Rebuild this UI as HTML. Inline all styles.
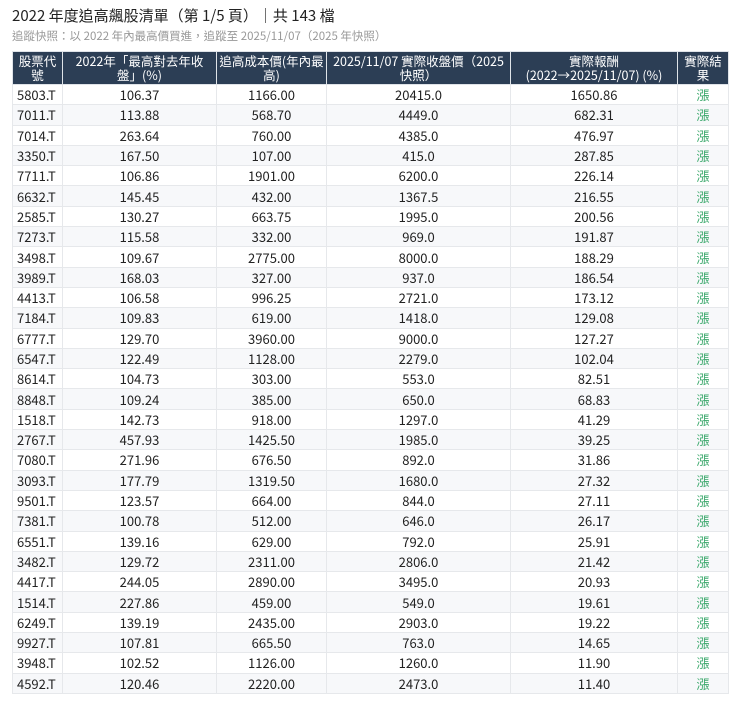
<!DOCTYPE html>
<html><head><meta charset="utf-8"><style>
body{margin:0;background:#fff;font-family:"Noto Sans CJK TC",sans-serif;color:#222;width:740px;height:706px;overflow:hidden}
h1{position:absolute;left:12px;top:6px;margin:0;font-size:15px;line-height:20px;font-weight:normal;color:#222}
.sub{position:absolute;left:12px;top:28px;font-size:11.5px;line-height:16px;color:#999}
table{position:absolute;left:12px;top:51px;border-collapse:collapse;width:716px;font-size:13px;table-layout:fixed}
th{background:#2c3e55;color:#fff;font-weight:normal;height:32px;padding:0;line-height:14px;border:1px solid #dfe3e8;font-size:12.5px;white-space:nowrap;overflow:hidden}
td{height:19.3px;padding:0 4px;text-align:center;border:1px solid #e6e8eb;line-height:19px}
td:first-child{text-align:left}
tr:nth-child(even) td{background:#f7f8fa}
td.g{color:#3aa86b}
</style></head><body>
<h1>2022 年度追高飆股清單（第 1/5 頁）｜共 143 檔</h1>
<div class="sub">追蹤快照：以 2022 年內最高價買進，追蹤至 2025/11/07（2025 年快照）</div>
<table>
<colgroup><col style="width:50px"><col style="width:154px"><col style="width:110px"><col style="width:184px"><col style="width:167px"><col style="width:51px"></colgroup>
<thead><tr><th>股票代<br>號</th><th>2022年「最高對去年收<br>盤」(%)</th><th>追高成本價(年內最<br>高)</th><th>2025/11/07 實際收盤價（2025<br>快照）</th><th>實際報酬<br>(2022→2025/11/07) (%)</th><th>實際結<br>果</th></tr></thead>
<tbody>
<tr><td>5803.T</td><td>106.37</td><td>1166.00</td><td>20415.0</td><td>1650.86</td><td class="g">漲</td></tr>
<tr><td>7011.T</td><td>113.88</td><td>568.70</td><td>4449.0</td><td>682.31</td><td class="g">漲</td></tr>
<tr><td>7014.T</td><td>263.64</td><td>760.00</td><td>4385.0</td><td>476.97</td><td class="g">漲</td></tr>
<tr><td>3350.T</td><td>167.50</td><td>107.00</td><td>415.0</td><td>287.85</td><td class="g">漲</td></tr>
<tr><td>7711.T</td><td>106.86</td><td>1901.00</td><td>6200.0</td><td>226.14</td><td class="g">漲</td></tr>
<tr><td>6632.T</td><td>145.45</td><td>432.00</td><td>1367.5</td><td>216.55</td><td class="g">漲</td></tr>
<tr><td>2585.T</td><td>130.27</td><td>663.75</td><td>1995.0</td><td>200.56</td><td class="g">漲</td></tr>
<tr><td>7273.T</td><td>115.58</td><td>332.00</td><td>969.0</td><td>191.87</td><td class="g">漲</td></tr>
<tr><td>3498.T</td><td>109.67</td><td>2775.00</td><td>8000.0</td><td>188.29</td><td class="g">漲</td></tr>
<tr><td>3989.T</td><td>168.03</td><td>327.00</td><td>937.0</td><td>186.54</td><td class="g">漲</td></tr>
<tr><td>4413.T</td><td>106.58</td><td>996.25</td><td>2721.0</td><td>173.12</td><td class="g">漲</td></tr>
<tr><td>7184.T</td><td>109.83</td><td>619.00</td><td>1418.0</td><td>129.08</td><td class="g">漲</td></tr>
<tr><td>6777.T</td><td>129.70</td><td>3960.00</td><td>9000.0</td><td>127.27</td><td class="g">漲</td></tr>
<tr><td>6547.T</td><td>122.49</td><td>1128.00</td><td>2279.0</td><td>102.04</td><td class="g">漲</td></tr>
<tr><td>8614.T</td><td>104.73</td><td>303.00</td><td>553.0</td><td>82.51</td><td class="g">漲</td></tr>
<tr><td>8848.T</td><td>109.24</td><td>385.00</td><td>650.0</td><td>68.83</td><td class="g">漲</td></tr>
<tr><td>1518.T</td><td>142.73</td><td>918.00</td><td>1297.0</td><td>41.29</td><td class="g">漲</td></tr>
<tr><td>2767.T</td><td>457.93</td><td>1425.50</td><td>1985.0</td><td>39.25</td><td class="g">漲</td></tr>
<tr><td>7080.T</td><td>271.96</td><td>676.50</td><td>892.0</td><td>31.86</td><td class="g">漲</td></tr>
<tr><td>3093.T</td><td>177.79</td><td>1319.50</td><td>1680.0</td><td>27.32</td><td class="g">漲</td></tr>
<tr><td>9501.T</td><td>123.57</td><td>664.00</td><td>844.0</td><td>27.11</td><td class="g">漲</td></tr>
<tr><td>7381.T</td><td>100.78</td><td>512.00</td><td>646.0</td><td>26.17</td><td class="g">漲</td></tr>
<tr><td>6551.T</td><td>139.16</td><td>629.00</td><td>792.0</td><td>25.91</td><td class="g">漲</td></tr>
<tr><td>3482.T</td><td>129.72</td><td>2311.00</td><td>2806.0</td><td>21.42</td><td class="g">漲</td></tr>
<tr><td>4417.T</td><td>244.05</td><td>2890.00</td><td>3495.0</td><td>20.93</td><td class="g">漲</td></tr>
<tr><td>1514.T</td><td>227.86</td><td>459.00</td><td>549.0</td><td>19.61</td><td class="g">漲</td></tr>
<tr><td>6249.T</td><td>139.19</td><td>2435.00</td><td>2903.0</td><td>19.22</td><td class="g">漲</td></tr>
<tr><td>9927.T</td><td>107.81</td><td>665.50</td><td>763.0</td><td>14.65</td><td class="g">漲</td></tr>
<tr><td>3948.T</td><td>102.52</td><td>1126.00</td><td>1260.0</td><td>11.90</td><td class="g">漲</td></tr>
<tr><td>4592.T</td><td>120.46</td><td>2220.00</td><td>2473.0</td><td>11.40</td><td class="g">漲</td></tr>
</tbody></table>
</body></html>
